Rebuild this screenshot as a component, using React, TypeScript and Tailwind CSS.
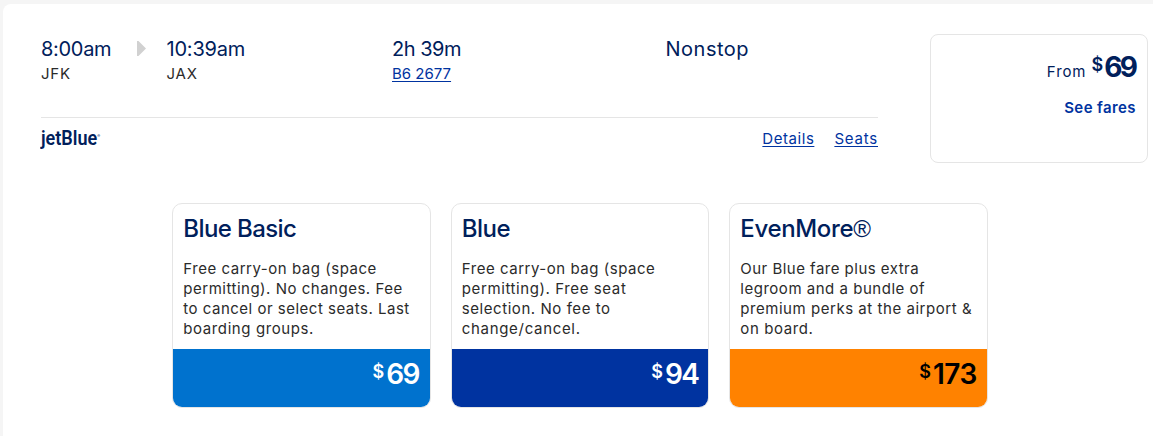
type Line = { text: string; tracking: string };

type Fare = {
  name: string;
  nameTracking: string;
  mark?: string;
  lines: Line[];
  price: string;
  priceTracking: string;
  bar: string;
};

const fares: Fare[] = [
  {
    name: "Blue Basic",
    nameTracking: "tracking-[-0.6px]",
    lines: [
      { text: "Free carry-on bag (space", tracking: "tracking-[0.53px]" },
      { text: "permitting). No changes. Fee", tracking: "tracking-[0.51px]" },
      { text: "to cancel or select seats. Last", tracking: "tracking-[0.5px]" },
      { text: "boarding groups.", tracking: "tracking-[0.6px]" },
    ],
    price: "69",
    priceTracking: "tracking-[-1.5px] mr-[0.5px]",
    bar: "bg-[#0072ce] text-white",
  },
  {
    name: "Blue",
    nameTracking: "tracking-[-0.5px]",
    lines: [
      { text: "Free carry-on bag (space", tracking: "tracking-[0.53px]" },
      { text: "permitting). Free seat", tracking: "tracking-[0.6px]" },
      { text: "selection. No fee to", tracking: "tracking-[0.56px]" },
      { text: "change/cancel.", tracking: "tracking-[0.68px]" },
    ],
    price: "94",
    priceTracking: "tracking-[-1.5px] mr-[-0.5px]",
    bar: "bg-[#0033a0] text-white",
  },
  {
    name: "EvenMore",
    nameTracking: "tracking-[-0.35px]",
    mark: "®",
    lines: [
      { text: "Our Blue fare plus extra", tracking: "tracking-[0.48px]" },
      { text: "legroom and a bundle of", tracking: "tracking-[0.52px]" },
      { text: "premium perks at the airport &", tracking: "tracking-[0.54px]" },
      { text: "on board.", tracking: "tracking-[0.6px]" },
    ],
    price: "173",
    priceTracking: "tracking-[-0.4px] mr-[-0.5px]",
    bar: "bg-[#ff8200] text-black",
  },
];

function FareCard({ fare }: { fare: Fare }) {
  return (
    <button className="flex h-[205px] w-[258.5px] flex-col overflow-hidden rounded-[10px] border border-[#e5e5e5] text-left">
      <div className="w-full flex-1 pt-[10px] pr-[9px] pl-[10.3px]">
        <h3 className={`flex text-[24px] leading-[30px] font-medium whitespace-nowrap text-[#00205b] ${fare.nameTracking}`}>
          {fare.name}
          {fare.mark && (
            <span className="font-['Liberation_Sans',sans-serif] text-[24px] leading-[30px] tracking-[0px]">{fare.mark}</span>
          )}
        </h3>
        <p className="mt-[15px] text-[15px] leading-[20px] text-[#2b2b2b]">
          {fare.lines.map((l) => (
            <span key={l.text} className={`block whitespace-nowrap ${l.tracking}`}>
              {l.text}
            </span>
          ))}
        </p>
      </div>
      <div className={`flex h-[58px] w-full items-start justify-end px-[10px] pt-[7px] font-semibold ${fare.bar}`}>
        <span className="mr-[2px] text-[18px] leading-[32px]">$</span>
        <span className={`text-[28px] leading-[36px] ${fare.priceTracking}`}>{fare.price}</span>
      </div>
    </button>
  );
}

export default function App() {
  return (
    <div className="h-[436px] w-full overflow-hidden bg-[#f5f5f5] pt-[4px] pl-[3px] font-['Inter',sans-serif]">
      <main className="h-full rounded-tl-[8px] bg-white pt-[30px]">
        <div className="flex">
          <section className="ml-[38px] w-[837px] pt-[3px]">
            <div className="flex h-[81px] border-b border-[#e5e5e5]">
              <div className="w-[95.5px]">
                <div className="text-[20px] leading-[25px] tracking-[-0.3px] text-[#00205b]">8:00am</div>
                <div className="text-[15px] leading-[24px] tracking-[0.8px] text-[#2b2b2b]">JFK</div>
              </div>
              <svg className="mt-[4px] h-[15px] w-[9px]" viewBox="0 0 9 15">
                <path d="M0 0h1.5L9 7.5 1.5 15H0z" fill="#d1d1d1" />
              </svg>
              <div className="ml-[21px] w-[225.5px]">
                <div className="text-[20px] leading-[25px] tracking-[-0.2px] text-[#00205b]">10:39am</div>
                <div className="text-[15px] leading-[24px] tracking-[0.8px] text-[#2b2b2b]">JAX</div>
              </div>
              <div className="w-[273.5px]">
                <div className="text-[20px] leading-[25px] tracking-[-0.5px] text-[#00205b]">2h 39m</div>
                <a className="block text-[15px] leading-[24px] text-[#0033a0] underline underline-offset-2">B6 2677</a>
              </div>
              <div className="text-[20px] leading-[25px] tracking-[0.5px] text-[#00205b]">Nonstop</div>
            </div>
            <div className="flex justify-between">
              <div className="mt-[7px] h-[28px] w-[60px] text-[#00205b]">
                <div className="w-[64px] origin-left scale-x-[0.9] font-['Roboto',sans-serif] text-[20px] leading-[27px] font-semibold">
                  jetBlue<span className="align-[8px] text-[4px] leading-none">®</span>
                </div>
              </div>
              <div className="flex gap-[20px] pt-[9px] text-[15px] leading-[24px] text-[#0033a0]">
                <a className="tracking-[0.55px] underline underline-offset-2">Details</a>
                <a className="tracking-[0.8px] underline underline-offset-2">Seats</a>
              </div>
            </div>
          </section>
          <aside className="ml-[52px] h-[129px] w-[218px] rounded-[8px] border border-[#e5e5e5] pt-[14px] pr-[10px] text-right">
            <div className="flex h-[36px] items-start justify-end text-[#00205b]">
              <span className="mr-[5px] pt-[9px] text-[15px] leading-[28px] tracking-[0.9px]">From</span>
              <span className="mr-px text-[18px] leading-[32px] font-semibold">$</span>
              <span className="pr-[1.5px] text-[28px] leading-[36px] font-bold tracking-[-2.5px]">69</span>
            </div>
            <div className="mt-[11px] pr-px text-[15px] leading-[24px] font-semibold tracking-[0.4px] text-[#0033a0]">See fares</div>
          </aside>
        </div>
        <div className="mt-[40px] ml-[169px] flex gap-[20px]">
          {fares.map((f) => (
            <FareCard key={f.name} fare={f} />
          ))}
        </div>
      </main>
    </div>
  );
}
